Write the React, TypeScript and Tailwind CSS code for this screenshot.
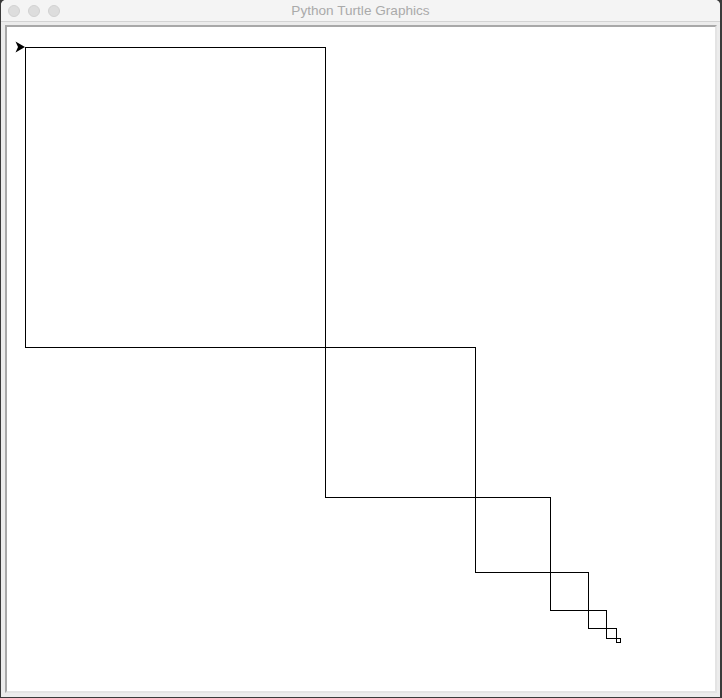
const squares = [
  { x: 25.5, y: 47.5, s: 300 },
  { x: 325.5, y: 347.5, s: 150 },
  { x: 475.5, y: 497.5, s: 75 },
  { x: 550.5, y: 572.5, s: 37.5 },
  { x: 588, y: 610, s: 18.75 },
  { x: 606.75, y: 628.75, s: 9.4 },
  { x: 616.2, y: 638.2, s: 4.7 },
];

function TrafficLight() {
  return (
    <span className="w-[12px] h-[12px] rounded-full bg-[#dddddd] border border-[#d1d1d1]" />
  );
}

export default function App() {
  return (
    <div className="w-[722px] h-[698px] bg-[#3a3a3a] pl-[1px] pr-[2px] pb-[1px] flex">
      <div className="flex-1 flex flex-col bg-[#ececec] rounded-t-[5px] overflow-hidden">
        {/* title bar */}
        <div className="relative h-[22px] shrink-0 bg-[#f4f4f4] border-b border-[#d3d3d3] flex items-center px-[7px] gap-[8px]">
          <TrafficLight />
          <TrafficLight />
          <TrafficLight />
          <div className="absolute inset-0 pt-[1px] flex items-center justify-center text-[13.6px] text-[#aaaaaa] font-['Liberation_Sans',Arial,sans-serif]">
            Python Turtle Graphics
          </div>
        </div>

        {/* canvas */}
        <div className="flex-1 pt-[3px] pl-[4px] pr-[3px] pb-[4px] flex">
          <div className="flex-1 bg-white border-2 border-t-[#a8a8a8] border-l-[#a8a8a8] border-b-[#e4e4e4] border-r-[#e4e4e4]">
            <svg width="708" height="664" viewBox="7 27 708 664" className="block">
              {squares.map((q, i) => (
                <rect
                  key={i}
                  x={q.x}
                  y={q.y}
                  width={q.s}
                  height={q.s}
                  fill="none"
                  stroke="#000"
                  strokeWidth="1"
                  shapeRendering="crispEdges"
                />
              ))}
              <polygon points="25,47 15.5,52.5 18,47 15.5,41.5" fill="#000" />
            </svg>
          </div>
        </div>
      </div>
    </div>
  );
}
